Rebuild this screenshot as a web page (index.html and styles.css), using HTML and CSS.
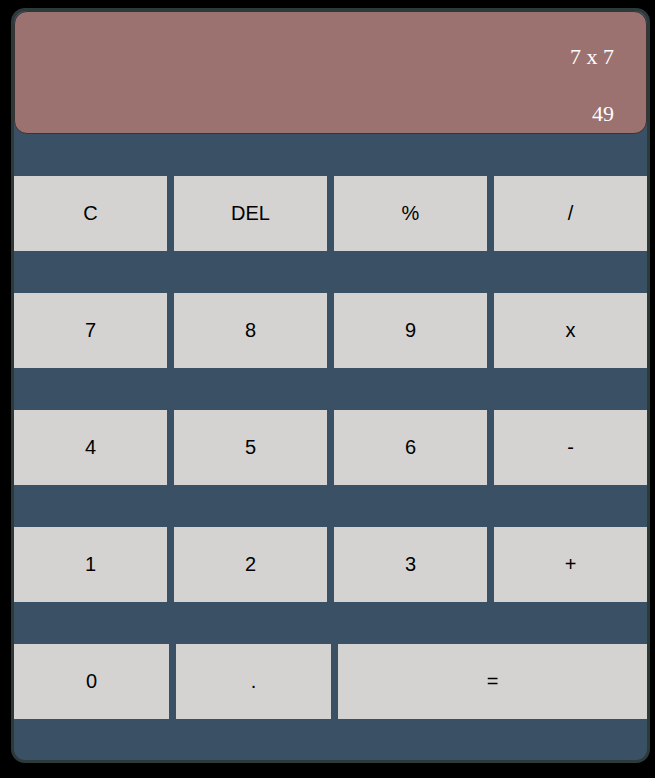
FILE: index.html
```html
<!DOCTYPE html>
<html>
<head>
<meta charset="utf-8">
<link rel="stylesheet" href="styles.css">
</head>
<body>
<div class="calc">
  <div class="display">
    <div class="expr">7 x 7</div>
    <div class="result">49</div>
  </div>
  <div class="row">
    <button class="key">C</button>
    <button class="key">DEL</button>
    <button class="key">%</button>
    <button class="key">/</button>
  </div>
  <div class="row">
    <button class="key">7</button>
    <button class="key">8</button>
    <button class="key">9</button>
    <button class="key">x</button>
  </div>
  <div class="row">
    <button class="key">4</button>
    <button class="key">5</button>
    <button class="key">6</button>
    <button class="key">-</button>
  </div>
  <div class="row">
    <button class="key">1</button>
    <button class="key">2</button>
    <button class="key">3</button>
    <button class="key">+</button>
  </div>
  <div class="row last">
    <button class="key">0</button>
    <button class="key">.</button>
    <button class="key">=</button>
  </div>
</div>
</body>
</html>
```
FILE: styles.css
```css
html, body {
  margin: 0;
  padding: 0;
  background: #000;
}
body {
  padding: 8px 0 0 11px;
  height: 778px;
  box-sizing: border-box;
}
.calc {
  width: 633px;
  border: 3px solid #2c3a3a;
  border-radius: 14px;
  background: #3a5064;
  padding-bottom: 41px;
  overflow: hidden;
}
.display {
  height: 123px;
  box-sizing: border-box;
  background: #9b7270;
  border: 1px solid #3b3333;
  border-radius: 13px;
  padding: 32px 32px 6px 0;
  font-family: "Liberation Serif", serif;
  font-size: 22px;
  line-height: 25px;
  color: #fff;
  text-align: right;
}
.result {
  margin-top: 32px;
}
.row {
  display: grid;
  grid-template-columns: repeat(4, 153px);
  column-gap: 7px;
  margin-top: 42px;
}
.row.last {
  grid-template-columns: 155px 155px 1fr;
}
.key {
  height: 75px;
  border: none;
  margin: 0;
  padding: 0;
  background: #d4d3d1;
  font-family: "Liberation Sans", Arial, sans-serif;
  font-size: 20px;
  color: #000;
}
```
